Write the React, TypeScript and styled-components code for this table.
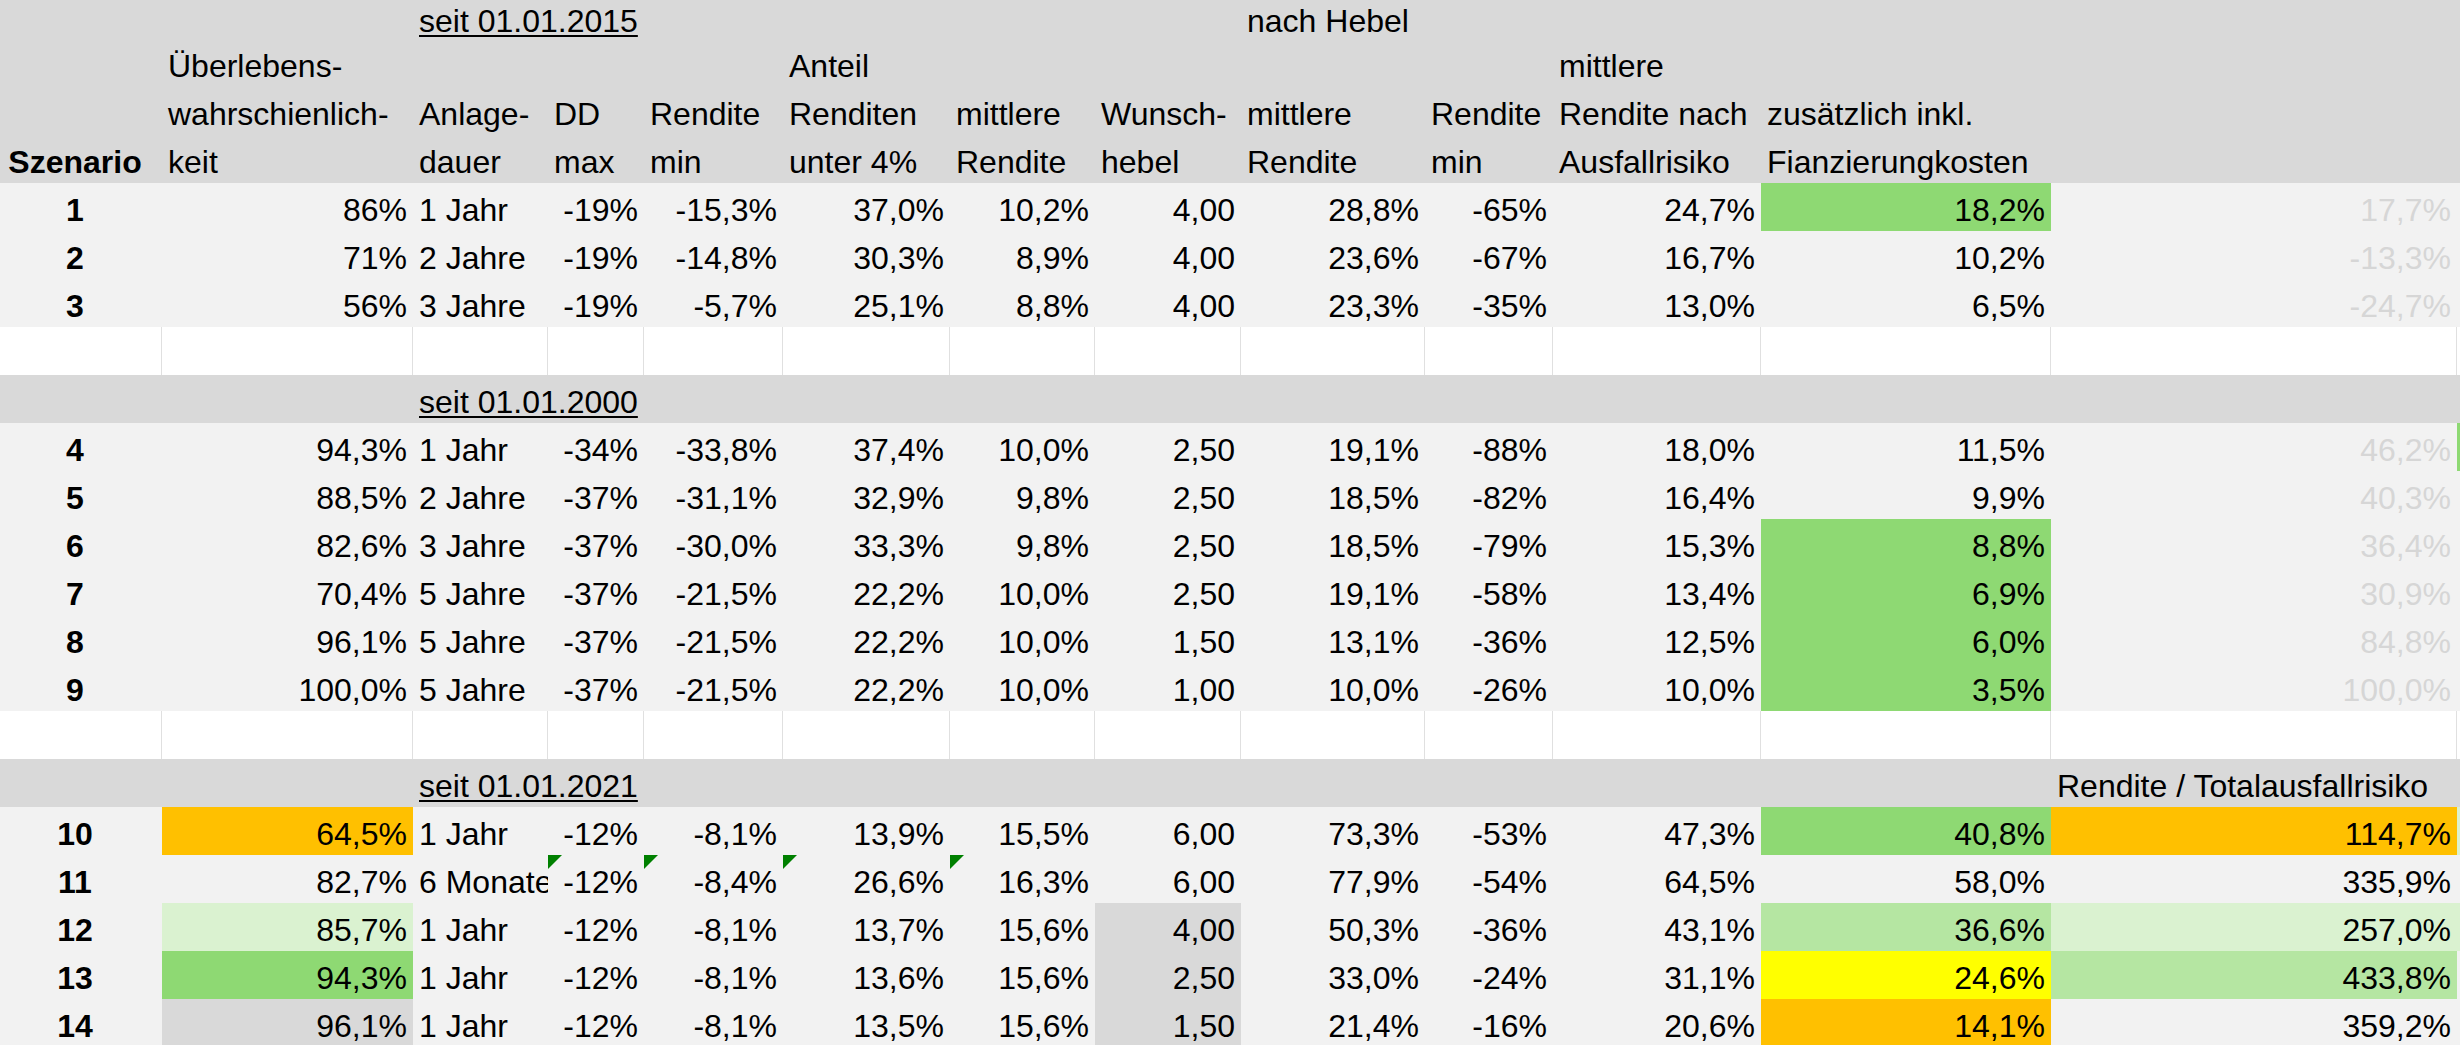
import React from 'react';
import styled, { createGlobalStyle } from 'styled-components';

const GlobalStyle = createGlobalStyle`
  html, body {
    margin: 0;
    padding: 0;
    overflow: hidden;
    background: #ffffff;
  }
  body {
    font-family: "Liberation Sans", Arial, sans-serif;
  }
`;

const COLS =
  '162px 251px 135px 96px 139px 167px 145px 146px 184px 128px 208px 290px 406px 3px';

type Tone = 'band' | 'data' | 'blank';
type Align = 'left' | 'right' | 'center';

const FILL = {
  green: '#8ed973',
  light: '#b5e6a2',
  pale: '#daf2d0',
  orange: '#ffc000',
  yellow: '#ffff00',
  grey: '#d9d9d9',
};

const Sheet = styled.div`
  width: 2460px;
  display: flex;
  flex-direction: column;
  font-size: 32px;
  color: #000000;
`;

const Row = styled.div<{ $tone: Tone; $short?: boolean }>`
  display: grid;
  grid-template-columns: ${COLS};
  height: ${(p) => (p.$short ? 39 : 48)}px;
  background: ${(p) =>
    p.$tone === 'band' ? '#d9d9d9' : p.$tone === 'data' ? '#f2f2f2' : '#ffffff'};
`;

const Cell = styled.div<{
  $align?: Align;
  $fill?: string;
  $bold?: boolean;
  $muted?: boolean;
  $grid?: boolean;
  $clip?: boolean;
  $id?: boolean;
}>`
  position: relative;
  display: flex;
  align-items: flex-end;
  justify-content: ${(p) =>
    p.$align === 'right' ? 'flex-end' : p.$align === 'center' ? 'center' : 'flex-start'};
  padding: ${(p) => (p.$id ? '0 12px 0 0' : '0 6px')};
  line-height: 42px;
  white-space: nowrap;
  min-width: 0;
  overflow: ${(p) => (p.$clip ? 'hidden' : 'visible')};
  background: ${(p) => p.$fill ?? 'transparent'};
  font-weight: ${(p) => (p.$bold ? 700 : 400)};
  color: ${(p) => (p.$muted ? '#d6d6d6' : '#000000')};
  box-shadow: ${(p) => (p.$grid ? 'inset -1px 0 0 #e0e0e0' : 'none')};
`;

const Underlined = styled.span`
  text-decoration: underline;
  text-decoration-thickness: 2px;
  text-underline-offset: 3px;
`;

const Marker = styled.span`
  position: absolute;
  top: 0;
  left: 0;
  width: 0;
  height: 0;
  border-top: 14px solid #008000;
  border-right: 14px solid transparent;
`;

type HeadCell = { text: React.ReactNode; bold?: boolean };

const headerRows: { short?: boolean; cells: HeadCell[] }[] = [
  {
    short: true,
    cells: [
      { text: '' },
      { text: '' },
      { text: <Underlined>seit 01.01.2015</Underlined> },
      { text: '' },
      { text: '' },
      { text: '' },
      { text: '' },
      { text: '' },
      { text: 'nach Hebel' },
      { text: '' },
      { text: '' },
      { text: '' },
      { text: '' },
      { text: '' },
    ],
  },
  {
    cells: [
      { text: '' },
      { text: 'Überlebens-' },
      { text: '' },
      { text: '' },
      { text: '' },
      { text: 'Anteil' },
      { text: '' },
      { text: '' },
      { text: '' },
      { text: '' },
      { text: 'mittlere' },
      { text: '' },
      { text: '' },
      { text: '' },
    ],
  },
  {
    cells: [
      { text: '' },
      { text: 'wahrschienlich-' },
      { text: 'Anlage-' },
      { text: 'DD' },
      { text: 'Rendite' },
      { text: 'Renditen' },
      { text: 'mittlere' },
      { text: 'Wunsch-' },
      { text: 'mittlere' },
      { text: 'Rendite' },
      { text: 'Rendite nach' },
      { text: 'zusätzlich inkl.' },
      { text: '' },
      { text: '' },
    ],
  },
  {
    cells: [
      { text: 'Szenario', bold: true },
      { text: 'keit' },
      { text: 'dauer' },
      { text: 'max' },
      { text: 'min' },
      { text: 'unter 4%' },
      { text: 'Rendite' },
      { text: 'hebel' },
      { text: 'Rendite' },
      { text: 'min' },
      { text: 'Ausfallrisiko' },
      { text: 'Fianzierungkosten' },
      { text: '' },
      { text: '' },
    ],
  },
];

type DataRow = {
  id: string;
  v: string[]; // columns B..M (12 values)
  fills?: Record<number, string>; // index into v, 12 = extra sliver
  mutedLast?: boolean;
  marks?: number[];
};

type Section = {
  band?: { title: string; right?: string };
  rows: DataRow[];
};

const sections: Section[] = [
  {
    rows: [
      {
        id: '1',
        v: ['86%', '1 Jahr', '-19%', '-15,3%', '37,0%', '10,2%', '4,00', '28,8%', '-65%', '24,7%', '18,2%', '17,7%'],
        fills: { 10: FILL.green },
        mutedLast: true,
      },
      {
        id: '2',
        v: ['71%', '2 Jahre', '-19%', '-14,8%', '30,3%', '8,9%', '4,00', '23,6%', '-67%', '16,7%', '10,2%', '-13,3%'],
        mutedLast: true,
      },
      {
        id: '3',
        v: ['56%', '3 Jahre', '-19%', '-5,7%', '25,1%', '8,8%', '4,00', '23,3%', '-35%', '13,0%', '6,5%', '-24,7%'],
        mutedLast: true,
      },
    ],
  },
  {
    band: { title: 'seit 01.01.2000' },
    rows: [
      {
        id: '4',
        v: ['94,3%', '1 Jahr', '-34%', '-33,8%', '37,4%', '10,0%', '2,50', '19,1%', '-88%', '18,0%', '11,5%', '46,2%'],
        fills: { 12: FILL.green },
        mutedLast: true,
      },
      {
        id: '5',
        v: ['88,5%', '2 Jahre', '-37%', '-31,1%', '32,9%', '9,8%', '2,50', '18,5%', '-82%', '16,4%', '9,9%', '40,3%'],
        mutedLast: true,
      },
      {
        id: '6',
        v: ['82,6%', '3 Jahre', '-37%', '-30,0%', '33,3%', '9,8%', '2,50', '18,5%', '-79%', '15,3%', '8,8%', '36,4%'],
        fills: { 10: FILL.green },
        mutedLast: true,
      },
      {
        id: '7',
        v: ['70,4%', '5 Jahre', '-37%', '-21,5%', '22,2%', '10,0%', '2,50', '19,1%', '-58%', '13,4%', '6,9%', '30,9%'],
        fills: { 10: FILL.green },
        mutedLast: true,
      },
      {
        id: '8',
        v: ['96,1%', '5 Jahre', '-37%', '-21,5%', '22,2%', '10,0%', '1,50', '13,1%', '-36%', '12,5%', '6,0%', '84,8%'],
        fills: { 10: FILL.green },
        mutedLast: true,
      },
      {
        id: '9',
        v: ['100,0%', '5 Jahre', '-37%', '-21,5%', '22,2%', '10,0%', '1,00', '10,0%', '-26%', '10,0%', '3,5%', '100,0%'],
        fills: { 10: FILL.green },
        mutedLast: true,
      },
    ],
  },
  {
    band: { title: 'seit 01.01.2021', right: 'Rendite / Totalausfallrisiko' },
    rows: [
      {
        id: '10',
        v: ['64,5%', '1 Jahr', '-12%', '-8,1%', '13,9%', '15,5%', '6,00', '73,3%', '-53%', '47,3%', '40,8%', '114,7%'],
        fills: { 0: FILL.orange, 10: FILL.green, 11: FILL.orange, 12: FILL.pale },
      },
      {
        id: '11',
        v: ['82,7%', '6 Monate', '-12%', '-8,4%', '26,6%', '16,3%', '6,00', '77,9%', '-54%', '64,5%', '58,0%', '335,9%'],
        marks: [2, 3, 4, 5],
      },
      {
        id: '12',
        v: ['85,7%', '1 Jahr', '-12%', '-8,1%', '13,7%', '15,6%', '4,00', '50,3%', '-36%', '43,1%', '36,6%', '257,0%'],
        fills: { 0: FILL.pale, 6: FILL.grey, 10: FILL.light, 11: FILL.pale, 12: FILL.pale },
      },
      {
        id: '13',
        v: ['94,3%', '1 Jahr', '-12%', '-8,1%', '13,6%', '15,6%', '2,50', '33,0%', '-24%', '31,1%', '24,6%', '433,8%'],
        fills: { 0: FILL.green, 6: FILL.grey, 10: FILL.yellow, 11: FILL.light },
      },
      {
        id: '14',
        v: ['96,1%', '1 Jahr', '-12%', '-8,1%', '13,5%', '15,6%', '1,50', '21,4%', '-16%', '20,6%', '14,1%', '359,2%'],
        fills: { 0: FILL.grey, 6: FILL.grey, 10: FILL.orange },
      },
    ],
  },
];

const COLUMN_COUNT = 14;

function HeaderRow({ short, cells }: { short?: boolean; cells: HeadCell[] }) {
  return (
    <Row $tone="band" $short={short}>
      {cells.map((c, i) =>
        i === 0 ? (
          <Cell key={i} $id $align="center" $bold={c.bold}>
            {c.text}
          </Cell>
        ) : (
          <Cell key={i} $align="left" $bold={c.bold}>
            {c.text}
          </Cell>
        ),
      )}
    </Row>
  );
}

function BlankRow() {
  return (
    <Row $tone="blank">
      {Array.from({ length: COLUMN_COUNT }).map((_, i) => (
        <Cell key={i} $grid={i < COLUMN_COUNT - 1} />
      ))}
    </Row>
  );
}

function BandRow({ title, right }: { title: string; right?: string }) {
  return (
    <Row $tone="band">
      {Array.from({ length: COLUMN_COUNT }).map((_, i) => (
        <Cell key={i} $align="left">
          {i === 2 ? <Underlined>{title}</Underlined> : i === 12 && right ? right : null}
        </Cell>
      ))}
    </Row>
  );
}

function ScenarioRow({ row }: { row: DataRow }) {
  const extra = row.fills?.[12];
  return (
    <Row $tone="data">
      <Cell $id $align="center" $bold>
        {row.id}
      </Cell>
      {row.v.map((val, i) => (
        <Cell
          key={i}
          $align={i === 1 ? 'left' : 'right'}
          $fill={row.fills?.[i]}
          $muted={row.mutedLast && i === 11}
          $clip
        >
          {row.marks?.includes(i) && <Marker />}
          {val}
        </Cell>
      ))}
      <Cell $fill={extra} />
    </Row>
  );
}

export default function App() {
  return (
    <>
      <GlobalStyle />
      <Sheet>
        {headerRows.map((h, i) => (
          <HeaderRow key={i} short={h.short} cells={h.cells} />
        ))}
        {sections.map((s, si) => (
          <React.Fragment key={si}>
            {s.band && (
              <>
                <BlankRow />
                <BandRow title={s.band.title} right={s.band.right} />
              </>
            )}
            {s.rows.map((r) => (
              <ScenarioRow key={r.id} row={r} />
            ))}
          </React.Fragment>
        ))}
      </Sheet>
    </>
  );
}
